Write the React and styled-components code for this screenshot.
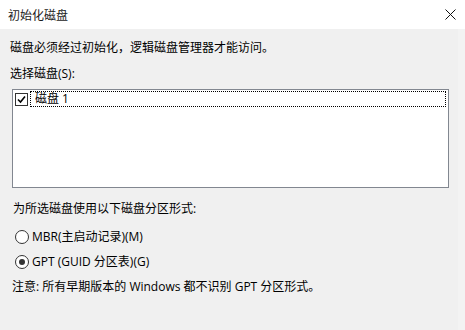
import React from 'react';
import styled, { createGlobalStyle } from 'styled-components';

const GlobalStyle = createGlobalStyle`
  html, body {
    margin: 0;
    padding: 0;
    background: #f0f0f0;
  }
  body {
    font-family: "Open Sans", "Noto Sans CJK SC", sans-serif;
    font-size: 12px;
    color: #000;
  }
`;

const Dialog = styled.div`
  width: 465px;
  height: 330px;
  display: flex;
  flex-direction: column;
  background: #f0f0f0;
  overflow: hidden;
`;

const TitleBar = styled.div`
  height: 29px;
  flex-shrink: 0;
  background: #fff;
  display: flex;
  align-items: center;
  justify-content: space-between;
  padding: 0 9px 0 8px;
  font-size: 12px;
  color: #1a1a1a;
`;

const CloseButton = styled.div`
  width: 12px;
  height: 12px;
  display: flex;
  align-items: center;
  justify-content: center;
`;

const Body = styled.div`
  flex: 1;
  display: flex;
  flex-direction: column;
  padding: 0 19px 0 10px;
  border-right: 7px solid #f3f3f3;
`;

const Text = styled.div`
  line-height: 16px;
  height: 16px;
  white-space: nowrap;
  margin-top: ${(p) => p.$top || 0}px;
  margin-left: ${(p) => p.$left || 0}px;
`;

const ListBox = styled.div`
  margin: 7px 0 0 2px;
  width: 433px;
  height: 95px;
  background: #fff;
  border: 1px solid #828790;
  padding: 1px;
  box-sizing: content-box;
`;

const ListItem = styled.div`
  display: flex;
  align-items: center;
  height: 16px;
`;

const CheckBox = styled.div`
  width: 11px;
  height: 11px;
  margin: 0 2px 0 1px;
  border: 1px solid #333;
  background: #fff;
  display: flex;
  align-items: center;
  justify-content: center;
`;

const ItemLabel = styled.div`
  flex: 1;
  height: 14px;
  line-height: 14px;
  border: 1px dotted #000;
  padding-left: 4px;
  margin-right: 1px;
`;

const RadioRow = styled.div`
  display: flex;
  align-items: center;
  gap: 3px;
  height: 16px;
  margin-top: ${(p) => p.$top}px;
  margin-left: 5px;
  line-height: 16px;
`;

const Radio = styled.div`
  width: 12px;
  height: 12px;
  border-radius: 50%;
  border: 1px solid #333;
  background: #fff;
  display: flex;
  align-items: center;
  justify-content: center;

  &::after {
    content: '';
    width: 6px;
    height: 6px;
    border-radius: 50%;
    background: ${(p) => (p.$checked ? '#333' : 'transparent')};
  }
`;

const App = () => (
  <>
    <GlobalStyle />
    <Dialog>
      <TitleBar>
        <span>初始化磁盘</span>
        <CloseButton>
          <svg width="11" height="11" viewBox="0 0 11 11">
            <path d="M0.5 0.5 L10.5 10.5 M10.5 0.5 L0.5 10.5" stroke="#111" strokeWidth="1" />
          </svg>
        </CloseButton>
      </TitleBar>
      <Body>
        <Text $top={11}>磁盘必须经过初始化，逻辑磁盘管理器才能访问。</Text>
        <Text $top={10}>选择磁盘(S):</Text>
        <ListBox>
          <ListItem>
            <CheckBox>
              <svg width="9" height="9" viewBox="0 0 9 9">
                <path d="M1 4.5 L3.5 7 L8 1.5" stroke="#000" strokeWidth="1.6" fill="none" />
              </svg>
            </CheckBox>
            <ItemLabel>磁盘 1</ItemLabel>
          </ListItem>
        </ListBox>
        <Text $top={13} $left={3}>为所选磁盘使用以下磁盘分区形式:</Text>
        <RadioRow $top={12}>
          <Radio />
          <span>MBR(主启动记录)(M)</span>
        </RadioRow>
        <RadioRow $top={9}>
          <Radio $checked />
          <span>GPT (GUID 分区表)(G)</span>
        </RadioRow>
        <Text $top={9} $left={2}>注意: 所有早期版本的 Windows 都不识别 GPT 分区形式。</Text>
      </Body>
    </Dialog>
  </>
);

export default App;
